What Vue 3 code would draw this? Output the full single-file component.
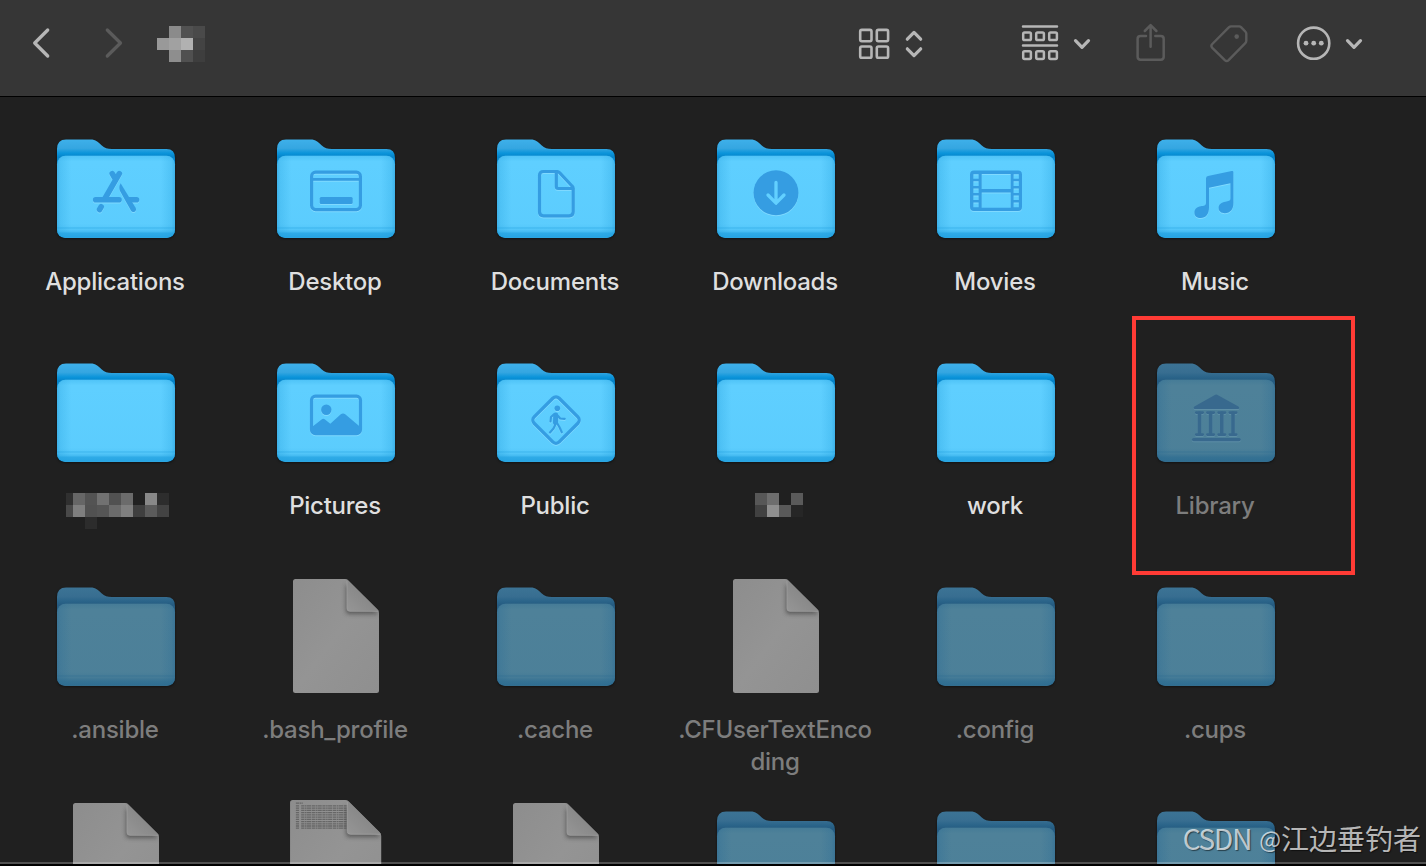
<template>
  <div class="finder">
    <header class="toolbar">
      <svg class="toolbar__icon toolbar__icon--back" width="24" height="48" viewBox="0 0 24 48">
        <path d="M17.7 10 4.700 23l13 13" stroke-width="3.300" />
      </svg>
      <svg class="toolbar__icon toolbar__icon--forward disabled" width="24" height="48" viewBox="0 0 24 48">
        <path d="M5.300 10l13.200 13L5.300 36" stroke-width="3.300" />
      </svg>
      <div class="mosaic mosaic--title">
        <span
          v-for="(color, i) in titleMosaic"
          :key="i"
          class="mosaic__cell"
          :style="{ background: color }"
        ></span>
      </div>
      <svg class="toolbar__icon toolbar__icon--grid" width="32" height="48" viewBox="0 0 32 48">
        <g stroke-width="2.6">
          <rect x="2.2" y="9.9" width="11.3" height="11.3" rx="1.6" />
          <rect x="18.8" y="9.9" width="11.3" height="11.3" rx="1.6" />
          <rect x="2.2" y="26.5" width="11.3" height="11.3" rx="1.6" />
          <rect x="18.8" y="26.5" width="11.3" height="11.3" rx="1.6" />
        </g>
      </svg>
      <svg class="toolbar__icon toolbar__icon--updown" width="20" height="48" viewBox="0 0 20 48">
        <path d="M3.3 19.2 10 12.4l6.7 6.8M3.3 28.8l6.7 6.8 6.7-6.8" stroke-width="3.2" />
      </svg>
      <svg class="toolbar__icon toolbar__icon--group" width="38" height="48" viewBox="0 0 38 48">
        <g stroke-width="2.5">
          <path d="M2 6.5h34M2 25.4h34" />
          <template v-for="x in [2.2, 15.2, 28.2]" :key="x">
            <rect :x="x" y="12.4" width="7.7" height="7.7" rx="1.4" />
            <rect :x="x" y="31.2" width="7.7" height="7.7" rx="1.4" />
          </template>
        </g>
      </svg>
      <svg class="toolbar__icon toolbar__icon--chevron" width="20" height="48" viewBox="0 0 20 48">
        <path d="M3.5 20.7l6.5 6.7 6.5-6.7" stroke-width="3.2" />
      </svg>
      <svg class="toolbar__icon toolbar__icon--share disabled" width="32" height="48" viewBox="0 0 32 48">
        <path
          d="M11 16H5.500q-2.900 0-2.900 2.900v17.900q0 2.900 2.900 2.900h20.300q2.900 0 2.900-2.900V18.900q0-2.900-2.900-2.900h-5.500M15.600 26.700V5.600M9.800 11l5.800-5.800 5.800 5.800"
          stroke-width="2.5"
        />
      </svg>
      <svg class="toolbar__icon toolbar__icon--tag disabled" width="40" height="48" viewBox="0 0 40 48">
        <path
          d="M22.3 6.4h7.8q1.3 0 2.2.9l4 4.2q1 1 1 2.3v7q0 1.3-1 2.3L19.6 40.2q-1.9 1.8-3.8 0L3.3 27.8q-1.8-1.9 0-3.8L19.8 7.4q1-1 2.5-1z"
          stroke-width="2.4"
        />
        <circle class="filled" cx="27.7" cy="16.6" r="2.3" />
      </svg>
      <svg class="toolbar__icon toolbar__icon--more" width="36" height="48" viewBox="0 0 36 48">
        <circle cx="17.7" cy="23.2" r="15.6" stroke-width="2.6" />
        <circle v-for="x in [10, 17.7, 25.3]" :key="x" class="filled" :cx="x" cy="23.2" r="2.4" />
      </svg>
      <svg class="toolbar__icon toolbar__icon--last" width="20" height="48" viewBox="0 0 20 48">
        <path d="M3.5 20.7l6.5 6.7 6.5-6.7" stroke-width="3.2" />
      </svg>
    </header>

    <!-- Shared gradients for the folder and document icons -->
    <svg class="defs" width="0" height="0">
      <defs>
        <linearGradient id="back" x1="0" y1="0" x2="0" y2="1">
          <stop offset="0" stop-color="#3eb0ea" />
          <stop offset="0.09" stop-color="#35a6e1" />
          <stop offset="0.14" stop-color="#0a94da" />
          <stop offset="0.18" stop-color="#0583c8" />
        </linearGradient>
        <linearGradient id="back-dim" x1="0" y1="0" x2="0" y2="1">
          <stop offset="0" stop-color="#3c7395" />
          <stop offset="0.09" stop-color="#386e91" />
          <stop offset="0.14" stop-color="#2a6489" />
          <stop offset="0.18" stop-color="#255b81" />
        </linearGradient>
        <linearGradient id="front" x1="0" y1="0" x2="1" y2="0">
          <stop offset="0" stop-color="#3fb2e9" />
          <stop offset="0.03" stop-color="#50c3f6" />
          <stop offset="0.12" stop-color="#5fcfff" />
          <stop offset="0.88" stop-color="#5fcfff" />
          <stop offset="0.97" stop-color="#50c3f6" />
          <stop offset="1" stop-color="#3fb2e9" />
        </linearGradient>
        <linearGradient id="front-dim" x1="0" y1="0" x2="1" y2="0">
          <stop offset="0" stop-color="#3b7495" />
          <stop offset="0.03" stop-color="#447b98" />
          <stop offset="0.12" stop-color="#4e8199" />
          <stop offset="0.88" stop-color="#4e8199" />
          <stop offset="0.97" stop-color="#447b98" />
          <stop offset="1" stop-color="#3b7495" />
        </linearGradient>
        <linearGradient id="shade" x1="0" y1="0" x2="0" y2="1">
          <stop offset="0" stop-color="#1f9fdf" stop-opacity="0.25" />
          <stop offset="0.07" stop-color="#1f9fdf" stop-opacity="0" />
          <stop offset="0.83" stop-color="#1f9fdf" stop-opacity="0.05" />
          <stop offset="0.865" stop-color="#1f9fdf" stop-opacity="0.12" />
          <stop offset="0.88" stop-color="#1f9fdf" stop-opacity="0.45" />
          <stop offset="0.9" stop-color="#1f9fdf" stop-opacity="0.2" />
          <stop offset="0.925" stop-color="#1f9fdf" stop-opacity="0.4" />
          <stop offset="0.945" stop-color="#1f9fdf" stop-opacity="0.75" />
          <stop offset="1" stop-color="#1f9fdf" stop-opacity="0.9" />
        </linearGradient>
        <linearGradient id="shade-dim" x1="0" y1="0" x2="0" y2="1">
          <stop offset="0" stop-color="#2b6b90" stop-opacity="0.25" />
          <stop offset="0.07" stop-color="#2b6b90" stop-opacity="0" />
          <stop offset="0.83" stop-color="#2b6b90" stop-opacity="0.05" />
          <stop offset="0.865" stop-color="#2b6b90" stop-opacity="0.15" />
          <stop offset="0.88" stop-color="#2b6b90" stop-opacity="0.45" />
          <stop offset="0.9" stop-color="#2b6b90" stop-opacity="0.25" />
          <stop offset="0.945" stop-color="#2b6b90" stop-opacity="0.7" />
          <stop offset="1" stop-color="#2b6b90" stop-opacity="0.9" />
        </linearGradient>
        <linearGradient id="paper" x1="0" y1="0" x2="1" y2="1">
          <stop offset="0" stop-color="#8d8d8d" />
          <stop offset="0.5" stop-color="#949494" />
          <stop offset="1" stop-color="#8f8f8f" />
        </linearGradient>
        <linearGradient id="fold" x1="0" y1="1" x2="0.6" y2="0.4">
          <stop offset="0" stop-color="#969696" />
          <stop offset="1" stop-color="#868686" />
        </linearGradient>
        <filter id="soft" x="-30%" y="-30%" width="160%" height="160%">
          <feGaussianBlur stdDeviation="2.2" />
        </filter>
        <clipPath id="paper-clip">
          <path :d="paperPath" />
        </clipPath>
      </defs>
    </svg>

    <main class="files">
      <div v-for="(item, index) in items" :key="index" class="file" :class="{ 'file--dim': item.dim }">
        <svg class="file__icon" width="128" height="128" viewBox="0 0 128 128">
          <g v-if="item.type === 'folder'">
            <path
              class="folder-shape"
              d="M5 25Q5 15.500 14 15.500H38.500C44 15.500 46 18.200 49.500 21.200C52.500 23.900 55.500 25 60 25H114.500Q123 25 123 34V105Q123 113.700 114.500 113.700H13.500Q5 113.700 5 105z"
              :fill="item.dim ? 'url(#back-dim)' : 'url(#back)'"
            />
            <rect x="5" y="31.7" width="118" height="82" rx="8.5" :fill="item.dim ? 'url(#front-dim)' : 'url(#front)'" />
            <rect x="5" y="31.7" width="118" height="82" rx="8.5" :fill="item.dim ? 'url(#shade-dim)' : 'url(#shade)'" />

            <g v-if="item.glyph" class="glyph">
              <g v-if="item.glyph === 'apps'" class="glyph__line" stroke-width="5.6">
                <path d="M60.200 49.600l2.600 4.600M67.300 49.600L53 74.500M49.200 82.800l-1.600 2.700M43.700 75.700H67M77 75.700H84.500" />
                <path
                  d="M68.600 59.200q-2.400 4.600-.2 8.600l10.500 18.600q1.400 2.300 3.700 1.300 2.200-1.400 1-3.900z"
                  stroke="none"
                  class="glyph__solid"
                />
              </g>
              <g v-else-if="item.glyph === 'desktop'" class="glyph__line" stroke-width="3.200">
                <rect x="39.600" y="48.200" width="48.800" height="37.400" rx="4" />
                <path d="M40 55.400h48" stroke-width="2.800" />
                <rect x="47.700" y="73" width="33" height="7" rx="1.500" class="glyph__solid" stroke="none" />
              </g>
              <g v-else-if="item.glyph === 'document'" class="glyph__line" stroke-width="3.200">
                <path d="M65.500 47.500H51.500q-4 0-4 4v36.300q0 4 4 4h25.700q4 0 4-4V65q0-1.800-1.200-3L67.500 48.700q-1-1.200-2-1.200z" />
                <path d="M64.300 48v14.500q0 2 2 2H81" />
              </g>
              <g v-else-if="item.glyph === 'download'">
                <circle cx="64" cy="68.800" r="22.500" class="glyph__solid" />
                <path d="M64 58.500V79M56 71l8 8.200 8-8.200" class="glyph__arrow" />
              </g>
              <path
                v-else-if="item.glyph === 'movie'"
                :d="moviePath"
                fill-rule="evenodd"
                class="glyph__solid"
              />
              <path
                v-else-if="item.glyph === 'music'"
                d="M53.300 54.500q0-2 2-2.400L79 47q1.700-.3 1.700 1.400V79c0 6-3 10.300-8.600 10.300-3.500 0-6.200-2-6.200-5.200 0-4 3-5.800 6.800-6.400 3-.5 5-.8 5-3.200V59.300l-21.400 4.400V83.500c0 6.500-3.200 10.500-8.400 10.500-3.500 0-6.200-2-6.200-5.300 0-3.800 2.800-5.800 6.400-6.400 3.200-.5 5.200-.8 5.200-3.300z"
                transform="translate(0.700 0)"
                class="glyph__solid"
              />
              <g v-else-if="item.glyph === 'picture'">
                <rect x="39.500" y="48.200" width="49" height="37.400" rx="4" class="glyph__line" stroke-width="3.200" />
                <circle cx="54.300" cy="61.800" r="5.200" class="glyph__solid" />
                <path
                  d="M40 79l9.600-7.600q1.700-1.300 3.400 0l5.300 4.400 10.500-9.500q2.200-1.700 4.400 0L88 78.800v3.700q0 3.500-3.500 3.500h-41q-3.500 0-3.500-3.500z"
                  class="glyph__solid"
                />
              </g>
              <g v-else-if="item.glyph === 'public'" class="glyph__line" stroke-width="3.300">
                <rect x="46.300" y="54.400" width="35.400" height="35.400" rx="4.500" transform="rotate(45 64 72.100)" />
                <circle cx="65.300" cy="60.300" r="2.800" class="glyph__solid" stroke="none" />
                <path d="M63.700 67l-.2 7.500" stroke-width="5" />
                <path
                  d="M62 66.300l-3 2.700-.5 4.500M66 68l2.200 2.500 4.500.3M63.200 77l-1.700 3.500-3.500 4M65.300 75.500l2.200 3.800 2.300 5"
                  stroke-width="2.200"
                />
              </g>
              <g v-else-if="item.glyph === 'library'" class="glyph__line">
                <path
                  d="M63.300 46.700q.9-.5 1.800 0L86.400 58.600q.8.600.8 1.300 0 1.100-1.300 1.100H42.900q-1.200 0-1.200-1.200 0-.8.700-1.200z"
                  stroke="none"
                  class="glyph__solid"
                />
                <template v-for="x in [47.5, 58.6, 69.8, 81]" :key="x">
                  <path :d="`M${x} 65v21`" stroke-width="3.600" />
                  <path :d="`M${x - 3.2} 64.600h6.400M${x - 3.2} 86.600h6.400`" stroke-width="2.700" />
                </template>
                <path d="M41.600 91.600h45.500" stroke-width="3.300" />
              </g>
            </g>
          </g>

          <g v-else :transform="item.preview ? 'translate(-4.2 -3.4) scale(1.06)' : undefined">
            <path :d="paperPath" fill="url(#paper)" />
            <g v-if="item.preview" class="preview">
              <path d="M26.500 10h6.500" />
              <path
                v-for="n in 11"
                :key="n"
                :d="`M26.500 ${10.5 + n * 2.1}h3.500M31.500 ${10.5 + n * 2.1}h${n % 3 ? 47 : 43}`"
              />
            </g>
            <g clip-path="url(#paper-clip)">
              <path d="M74 12v27q0 3 3 3h30z" fill="#505050" opacity="0.85" filter="url(#soft)" />
            </g>
            <path d="M75 7.600V36.500q0 2.800 2.800 2.800H107z" fill="url(#fold)" />
            <path d="M75 9V36.500q0 2.800 2.800 2.800H106" fill="none" stroke="#a0a0a0" stroke-width="0.800" />
          </g>
        </svg>

        <div v-if="item.mosaic" class="mosaic" :class="`mosaic--${item.mosaic}`">
          <span
            v-for="(color, i) in labelMosaics[item.mosaic]"
            :key="i"
            class="mosaic__cell"
            :style="{ background: color }"
          ></span>
        </div>
        <p v-else class="file__name">{{ item.name }}</p>

        <div v-if="item.name === 'Library'" class="highlight"></div>
      </div>
    </main>

    <div class="bottom-edge"></div>
    <div class="watermark">
      <span class="watermark__site">CSDN</span>
      <span class="watermark__at">@</span>
      <span class="watermark__author">江边垂钓者</span>
    </div>
  </div>
</template>

<script setup>
import { ref } from "vue";

const items = ref([
  { name: "Applications", type: "folder", glyph: "apps" },
  { name: "Desktop", type: "folder", glyph: "desktop" },
  { name: "Documents", type: "folder", glyph: "document" },
  { name: "Downloads", type: "folder", glyph: "download" },
  { name: "Movies", type: "folder", glyph: "movie" },
  { name: "Music", type: "folder", glyph: "music" },
  { type: "folder", mosaic: "long" },
  { name: "Pictures", type: "folder", glyph: "picture" },
  { name: "Public", type: "folder", glyph: "public" },
  { type: "folder", mosaic: "short" },
  { name: "work", type: "folder" },
  { name: "Library", type: "folder", glyph: "library", dim: true },
  { name: ".ansible", type: "folder", dim: true },
  { name: ".bash_profile", type: "file", dim: true },
  { name: ".cache", type: "folder", dim: true },
  { name: ".CFUserTextEncoding", type: "file", dim: true },
  { name: ".config", type: "folder", dim: true },
  { name: ".cups", type: "folder", dim: true },
  { type: "file", dim: true },
  { type: "file", dim: true, preview: true },
  { type: "file", dim: true },
  { type: "folder", dim: true },
  { type: "folder", dim: true },
  { type: "folder", dim: true },
]);

// Pixelated blocks that cover private names
const titleMosaic = [
  "transparent", "#8b8b8b", "#515151", "#4a4a4a",
  "#999999", "#a1a1a1", "#b1b1b1", "#434343",
  "transparent", "#8e8e8e", "#505050", "#3e3e3e",
];

const labelMosaics = {
  long: [
    "#303030", "#666666", "#535353", "#717171", "#515151", "#6b6b6b", "#212121", "#888888", "#2d2d2d",
    "#494949", "#7f7f7f", "#515151", "#555555", "#6b6b6b", "#7f7f7f", "#3f3f3f", "#5b5b5b", "#434343",
    "transparent", "transparent", "#2c2c2c",
  ],
  short: [
    "#575757", "#6e6e6e", "#202020", "#5a5a5a",
    "#414141", "#8f8f8f", "#595959", "#262626",
  ],
};

const paperPath =
  "M23.5 7H73q2 0 3.4 1.4L105.6 37.5q1.4 1.4 1.4 3.4V118.5q0 2.5-2.5 2.5H23.5q-2.5 0-2.5-2.5V9.5Q21 7 23.5 7z";

// Film strip: outer frame with the holes cut out by the even-odd rule
const box = (x, y, w, h) => `M${x} ${y}h${w}v${h}h${-w}z`;
const holes = [50.2, 57.3, 64.4, 71.5, 78.6]
  .map((y) => box(41.4, y, 5.2, 4.6) + box(81.6, y, 5.2, 4.6))
  .join("");
const moviePath =
  "M42 46.5H86q4 0 4 4V83q0 4-4 4H42q-4 0-4-4V50.5q0-4 4-4z" +
  holes +
  box(49.7, 50, 29, 15) +
  box(49.7, 68.4, 29, 15.3);
</script>

<style>
body {
  margin: 0;
  background: #202020;
}
</style>

<style scoped>
.finder {
  position: relative;
  width: 1426px;
  height: 866px;
  overflow: hidden;
  background: #202020;
  font-family: Inter, "Noto Sans CJK SC", sans-serif;
}

.toolbar {
  display: flex;
  align-items: flex-start;
  box-sizing: border-box;
  height: 97px;
  padding: 20px 0 0 30px;
  background: #363636;
  border-bottom: 1px solid #000;
}

.toolbar__icon {
  flex: none;
  fill: none;
  stroke: #b6b6b6;
  stroke-linecap: round;
  stroke-linejoin: round;
}

.toolbar__icon .filled {
  fill: #b6b6b6;
  stroke: none;
}

.toolbar__icon.disabled {
  stroke: #5b5b5b;
}

.toolbar__icon.disabled .filled {
  fill: #5b5b5b;
}

.toolbar__icon--forward {
  margin-left: 48px;
}

.toolbar__icon--grid {
  margin-left: 653px;
}

.toolbar__icon--updown {
  margin-left: 14px;
}

.toolbar__icon--group {
  margin-left: 97px;
}

.toolbar__icon--chevron {
  margin-left: 13px;
}

.toolbar__icon--share {
  margin-left: 43px;
}

.toolbar__icon--tag {
  margin-left: 42px;
}

.toolbar__icon--more {
  margin-left: 47px;
}

.toolbar__icon--last {
  margin-left: 12px;
}

.mosaic {
  display: grid;
  grid-template-columns: repeat(4, 12px);
  grid-auto-rows: 12px;
}

.mosaic--title {
  margin: 6px 0 0 31px;
}

.mosaic--long {
  grid-template-columns: 7px repeat(8, 12px);
  margin: 17px 0 0 61px;
}

.mosaic--short {
  margin: 17px 0 0 90px;
}

.defs {
  position: absolute;
}

.files {
  display: grid;
  grid-template-columns: repeat(6, 220px);
  grid-auto-rows: 224px;
  padding: 27px 0 0 5px;
}

.file {
  position: relative;
}

.file__icon {
  display: block;
  margin-left: 47px;
}

.folder-shape {
  filter: drop-shadow(0 1px 1px rgba(0, 0, 0, 0.5));
}

.file__name {
  width: 200px;
  margin: 14px auto 0;
  color: #dfdfdf;
  font-size: 24px;
  font-weight: 500;
  line-height: 32px;
  letter-spacing: -0.25px;
  text-align: center;
  word-break: break-all;
}

.file--dim .file__name {
  color: #7d7d7d;
}

.glyph {
  filter: drop-shadow(0 1px 0.5px rgba(150, 225, 255, 0.6));
}

.glyph__line {
  fill: none;
  stroke: #359de2;
  stroke-linecap: round;
  stroke-linejoin: round;
}

.glyph__solid {
  fill: #359de2;
}

.glyph__arrow {
  fill: none;
  stroke: #62d0ff;
  stroke-width: 3.3;
  stroke-linecap: round;
  stroke-linejoin: round;
}

.file--dim .glyph {
  filter: drop-shadow(0 1px 0.5px rgba(110, 155, 180, 0.5));
}

.file--dim .glyph__line {
  stroke: #38698e;
}

.file--dim .glyph__solid {
  fill: #38698e;
}

.preview {
  fill: none;
  stroke: #666;
  stroke-width: 1.2;
  stroke-dasharray: 3 0.5 1.5 0.4 4 0.6;
}

/* Red frame around the Library folder */
.highlight {
  position: absolute;
  top: -32px;
  left: 27px;
  box-sizing: border-box;
  width: 223px;
  height: 259px;
  border: 4px solid #ff3b35;
}

.bottom-edge {
  position: absolute;
  right: 0;
  bottom: 0;
  left: 0;
  height: 2px;
  background: #000;
  border-top: 2px solid rgba(255, 255, 255, 0.22);
  background-clip: padding-box;
}

.watermark {
  position: absolute;
  right: 5px;
  bottom: 7px;
  display: flex;
  align-items: center;
  height: 42px;
  color: rgba(255, 255, 255, 0.7);
  font-family: "Noto Sans CJK SC", sans-serif;
  font-size: 28px;
  font-weight: 400;
  line-height: 42px;
  text-shadow: 1px 1px 1px rgba(0, 0, 0, 0.5);
}

.watermark__site {
  margin-right: 8px;
  letter-spacing: -1.2px;
}

.watermark__at {
  font-size: 23px;
}
</style>
